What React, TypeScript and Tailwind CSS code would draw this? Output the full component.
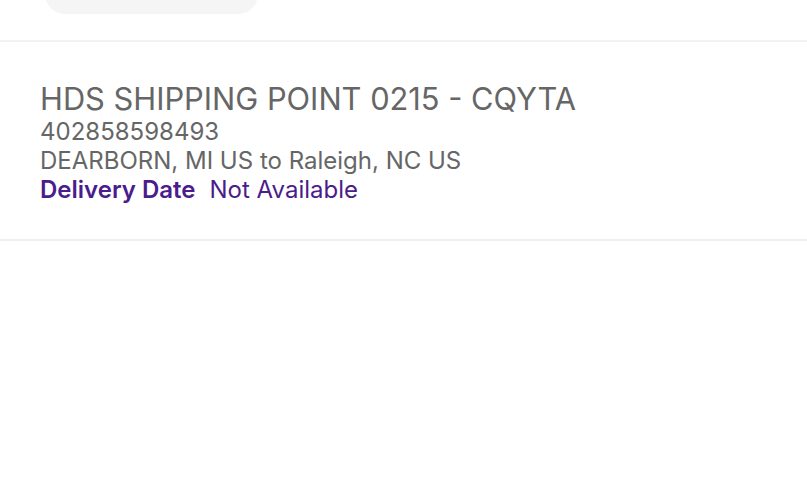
export default function App() {
  return (
    <div className="min-h-screen bg-white" style={{ fontFamily: "Inter, 'Noto Sans', sans-serif" }}>
      <div className="flex h-[42px] overflow-hidden border-b-2 border-[#f2f2f2] pl-[45px]">
        <div className="-mt-[40px] h-[54px] w-[213px] rounded-[20px] bg-[#f5f5f5]" />
      </div>
      <div className="border-b-2 border-[#f0f0f0] px-10 pt-[39px] pb-[35px]">
        <div className="text-[30.8px] leading-[36px] text-[#666666]">HDS SHIPPING POINT 0215 - CQYTA</div>
        <div className="text-[24px] leading-[29px] text-[#666666]">402858598493</div>
        <div className="text-[24px] leading-[29px] text-[#666666]">DEARBORN, MI US to Raleigh, NC US</div>
        <div className="flex gap-[14px] text-[24px] leading-[29px] text-[#4b1c8c]">
          <span className="font-semibold">Delivery Date</span>
          <span>Not Available</span>
        </div>
      </div>
    </div>
  );
}
